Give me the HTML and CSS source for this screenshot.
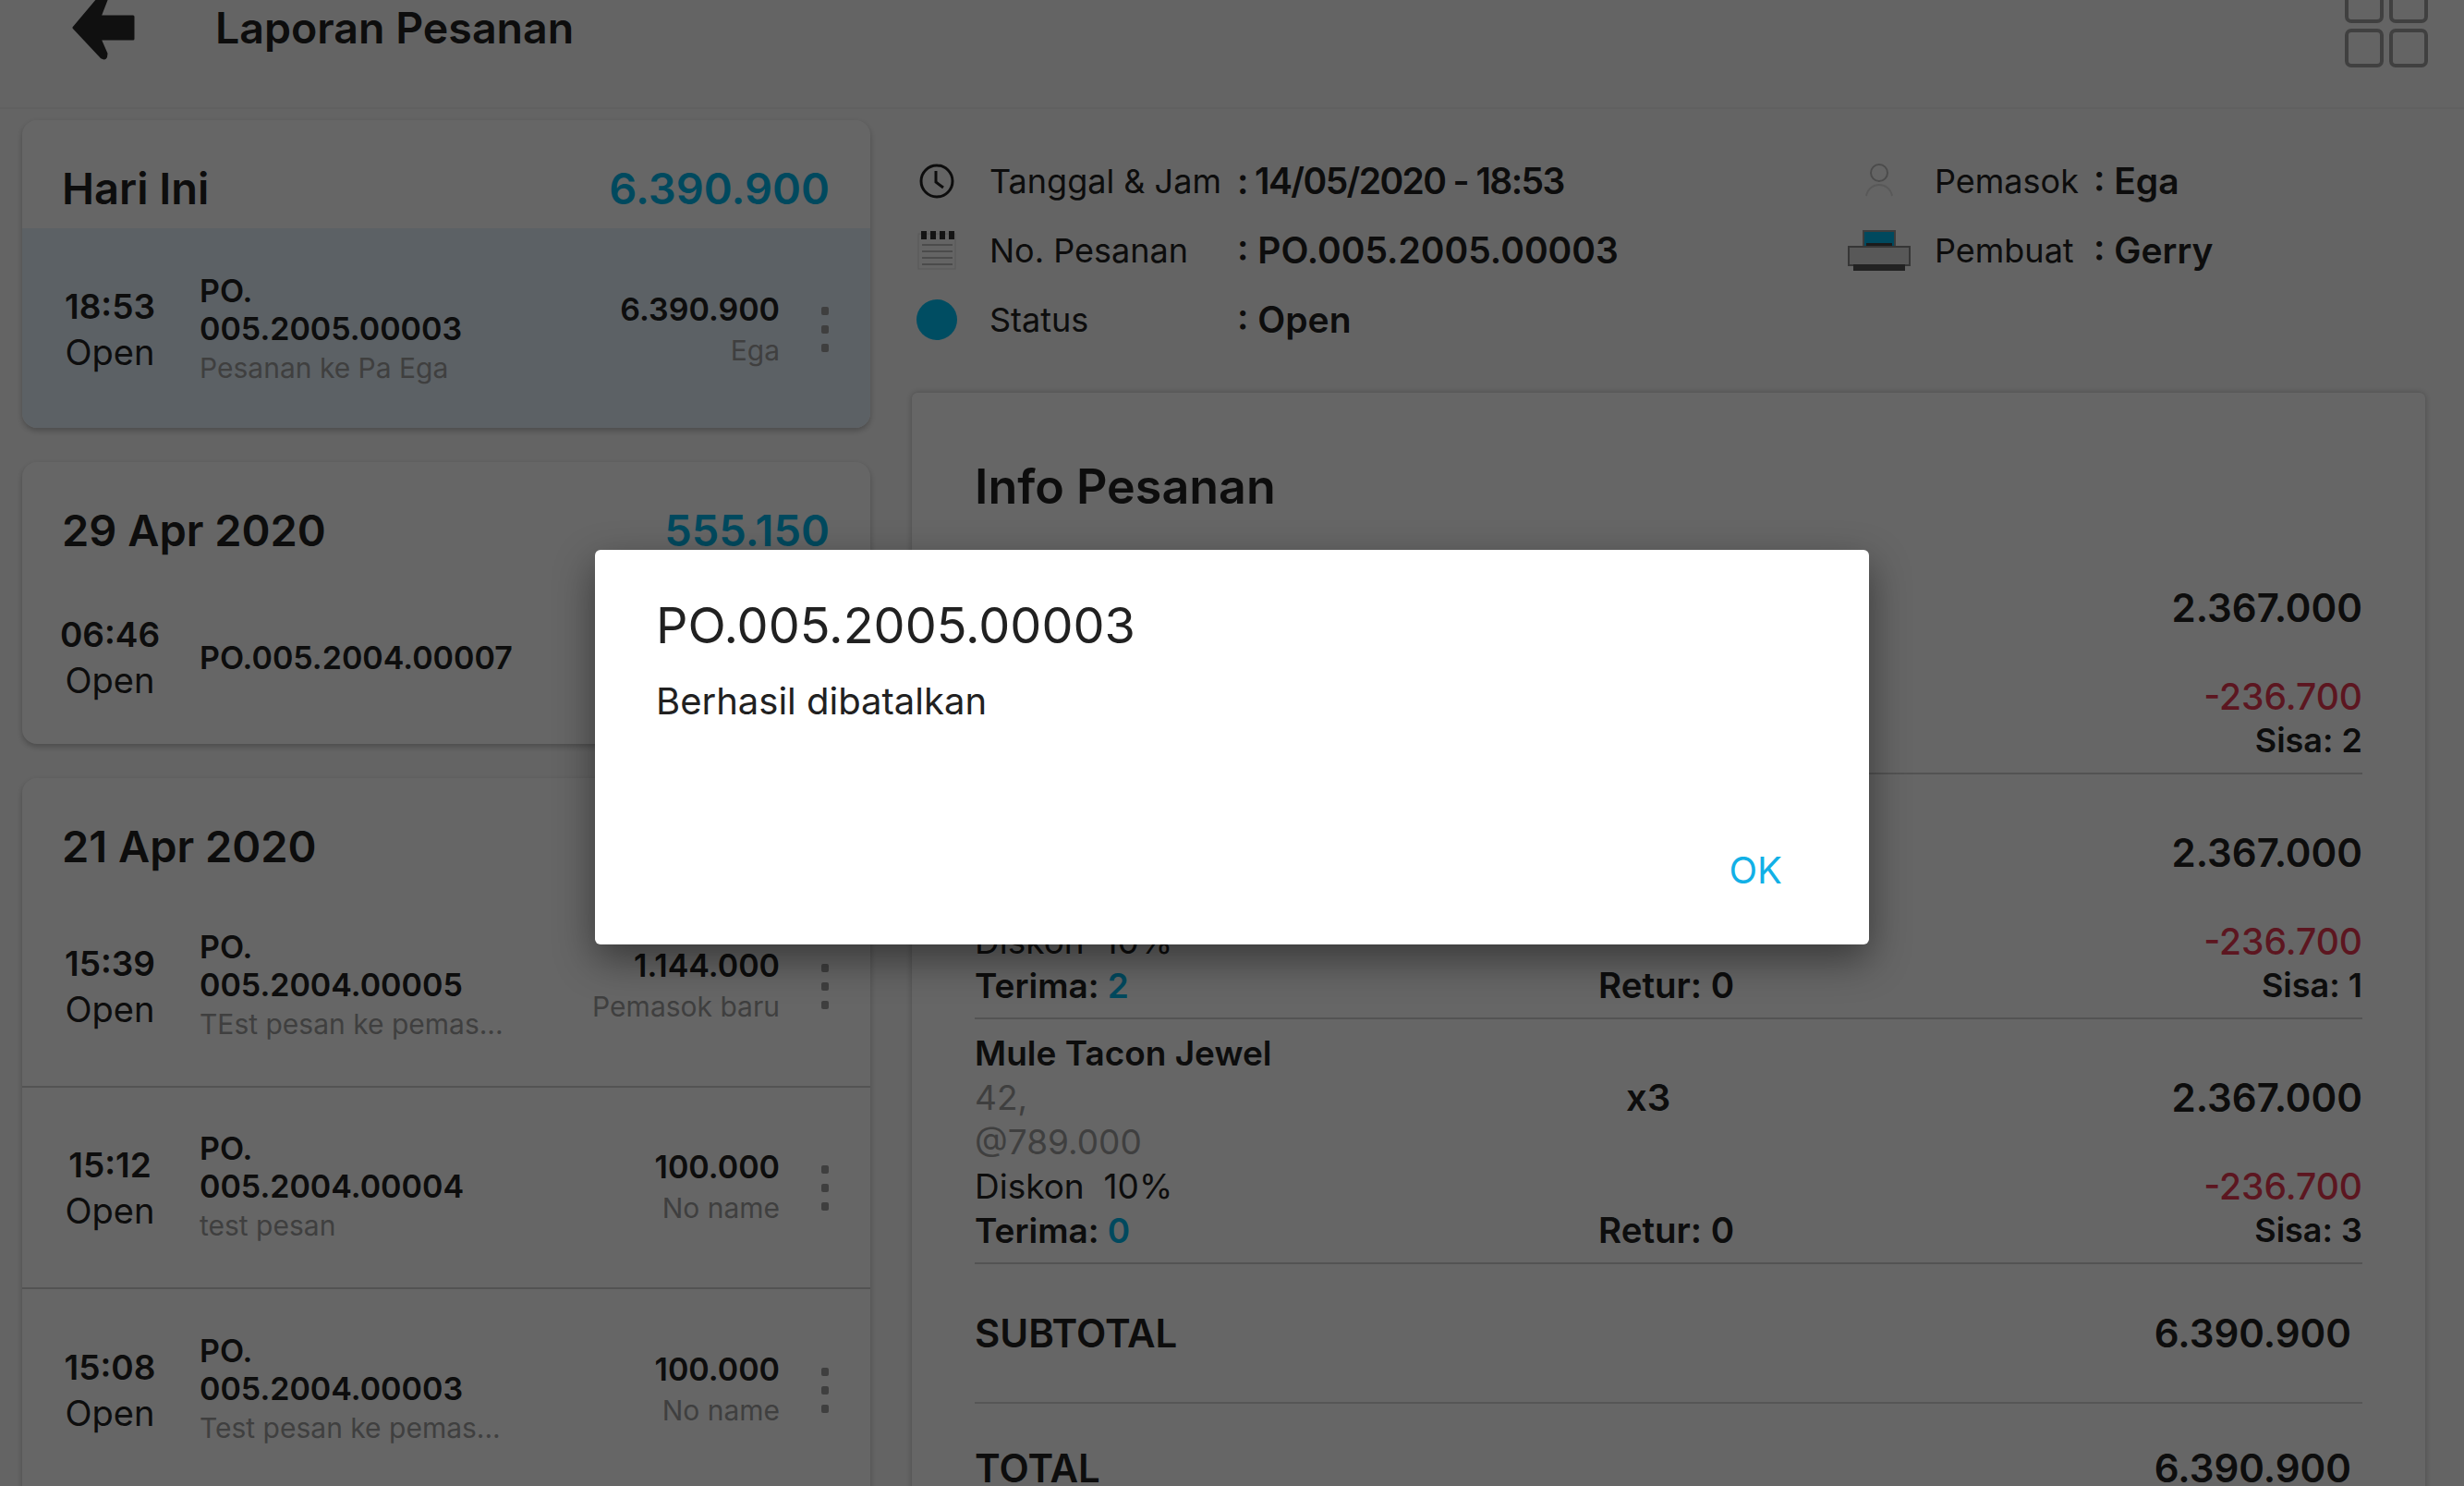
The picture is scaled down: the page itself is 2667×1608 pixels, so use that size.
FILE: index.html
```html
<!DOCTYPE html>
<html lang="en">

<head>
    <meta charset="UTF-8">
    <title>Laporan Pesanan</title>
    <link rel="stylesheet" href="styles.css">
</head>

<body>
    <header class="topbar">
        <svg class="back-icon" viewBox="78 -8 70 76">
            <path d="M112 -8 L80 30 L110 62 Q115 65 115 58 L108 42 H144 V18 H108 L115 0 Z" fill="#2a2a2a" stroke="#2a2a2a" stroke-width="3" stroke-linejoin="round" />
        </svg>
        <h1 class="page-title">Laporan Pesanan</h1>
        <svg class="grid-icon" viewBox="0 0 90 90">
            <g fill="none" stroke="#a0a0a0" stroke-width="4">
                <rect x="2" y="2" width="38" height="38" rx="5" />
                <rect x="50" y="2" width="38" height="38" rx="5" />
                <rect x="2" y="50" width="38" height="38" rx="5" />
                <rect x="50" y="50" width="38" height="38" rx="5" />
            </g>
        </svg>
    </header>

    <div class="layout">
        <aside class="orders">
            <section class="day-card">
                <div class="day-head">
                    <span>Hari Ini</span>
                    <span class="accent">6.390.900</span>
                </div>
                <div class="order selected">
                    <div class="order-time"><b>18:53</b><span>Open</span></div>
                    <div class="order-no"><b>PO.<br>005.2005.00003</b><small>Pesanan ke Pa Ega</small></div>
                    <div class="order-sum"><b>6.390.900</b><small>Ega</small></div>
                    <div class="dots"><i></i><i></i><i></i></div>
                </div>
            </section>

            <section class="day-card">
                <div class="day-head">
                    <span>29 Apr 2020</span>
                    <span class="accent">555.150</span>
                </div>
                <div class="order single">
                    <div class="order-time"><b>06:46</b><span>Open</span></div>
                    <div class="order-no"><b>PO.005.2004.00007</b></div>
                </div>
            </section>

            <section class="day-card long">
                <div class="day-head">
                    <span>21 Apr 2020</span>
                </div>
                <div class="order">
                    <div class="order-time"><b>15:39</b><span>Open</span></div>
                    <div class="order-no"><b>PO.<br>005.2004.00005</b><small>TEst pesan ke pemas...</small></div>
                    <div class="order-sum"><b>1.144.000</b><small>Pemasok baru</small></div>
                    <div class="dots"><i></i><i></i><i></i></div>
                </div>
                <div class="order">
                    <div class="order-time"><b>15:12</b><span>Open</span></div>
                    <div class="order-no"><b>PO.<br>005.2004.00004</b><small>test pesan</small></div>
                    <div class="order-sum"><b>100.000</b><small>No name</small></div>
                    <div class="dots"><i></i><i></i><i></i></div>
                </div>
                <div class="order">
                    <div class="order-time"><b>15:08</b><span>Open</span></div>
                    <div class="order-no"><b>PO.<br>005.2004.00003</b><small>Test pesan ke pemas...</small></div>
                    <div class="order-sum"><b>100.000</b><small>No name</small></div>
                    <div class="dots"><i></i><i></i><i></i></div>
                </div>
            </section>
        </aside>

        <main class="detail">
            <div class="meta">
                <div class="meta-col">
                    <div class="meta-row">
                        <svg class="meta-icon" viewBox="0 0 44 44">
                            <circle cx="22" cy="22" r="17" fill="none" stroke="#222" stroke-width="3" />
                            <path d="M21 11 V23 L29 29" fill="none" stroke="#222" stroke-width="3" />
                        </svg>
                        <span class="meta-label">Tanggal &amp; Jam</span><b class="tight">: 14/05/2020 - 18:53</b>
                    </div>
                    <div class="meta-row">
                        <svg class="meta-icon" viewBox="0 0 44 44">
                            <rect x="2" y="4" width="40" height="38" fill="#fafafa" stroke="#ddd" stroke-width="1" />
                            <path d="M5 1 h6 v9 h-6z M15 1 h6 v9 h-6z M25 1 h6 v9 h-6z M35 1 h6 v9 h-6z" fill="#333" />
                            <path d="M6 16 H39 M6 23 H39 M6 30 H39 M6 37 H39" stroke="#bbb" stroke-width="2" />
                        </svg>
                        <span class="meta-label">No. Pesanan</span><b>: PO.005.2005.00003</b>
                    </div>
                    <div class="meta-row">
                        <span class="status-dot"></span>
                        <span class="meta-label">Status</span><b>: Open</b>
                    </div>
                </div>
                <div class="meta-col second">
                    <div class="meta-row">
                        <svg class="meta-icon" viewBox="0 0 70 44">
                            <circle cx="35" cy="13" r="9" fill="none" stroke="#bbb" stroke-width="2" />
                            <path d="M21 38 C24 22 46 22 49 38" fill="none" stroke="#ddd" stroke-width="2" />
                        </svg>
                        <span class="meta-label">Pemasok</span><b>: Ega</b>
                    </div>
                    <div class="meta-row">
                        <svg class="meta-icon" viewBox="0 0 70 44">
                            <rect x="18" y="1" width="34" height="17" fill="#00b7eb" stroke="#999" stroke-width="2" />
                            <rect x="21" y="14" width="28" height="5" fill="#444" />
                            <rect x="2" y="18" width="66" height="20" fill="#ddd" stroke="#888" stroke-width="2" />
                            <rect x="7" y="37" width="56" height="7" fill="#555" />
                        </svg>
                        <span class="meta-label">Pembuat</span><b>: Gerry</b>
                    </div>
                </div>
            </div>

            <section class="info-card">
                <h2 class="info-title">Info Pesanan</h2>

                <!-- left part of the first two items sits behind the dialog -->
                <div class="item">
                    <span></span><span></span><span></span>
                    <span></span><span></span><b class="price">2.367.000</b>
                    <span></span><span></span><span></span>
                    <span></span><span></span><span class="minus">-236.700</span>
                    <span></span><span></span><b class="sisa">Sisa: 2</b>
                </div>

                <div class="item">
                    <span></span><span></span><span></span>
                    <span></span><span></span><b class="price">2.367.000</b>
                    <span></span><span></span><span></span>
                    <span>Diskon &nbsp;10%</span><span></span><span class="minus">-236.700</span>
                    <b>Terima: <em>2</em></b><b class="retur">Retur: 0</b><b class="sisa">Sisa: 1</b>
                </div>

                <div class="item">
                    <b>Mule Tacon Jewel</b><span></span><span></span>
                    <span class="muted">42,</span><b class="qty">x3</b><b class="price">2.367.000</b>
                    <span class="muted">@789.000</span><span></span><span></span>
                    <span>Diskon &nbsp;10%</span><span></span><span class="minus">-236.700</span>
                    <b>Terima: <em>0</em></b><b class="retur">Retur: 0</b><b class="sisa">Sisa: 3</b>
                </div>

                <div class="summary"><span>SUBTOTAL</span><span>6.390.900</span></div>
                <div class="summary total"><span>TOTAL</span><span>6.390.900</span></div>
            </section>
        </main>
    </div>

    <div class="scrim"></div>

    <div class="dialog">
        <div class="dialog-title">PO.005.2005.00003</div>
        <div class="dialog-text">Berhasil dibatalkan</div>
        <div class="dialog-ok">OK</div>
    </div>
</body>

</html>
```

FILE: styles.css
```css
html {
    overflow: hidden;
}

body {
    font-family: "Inter", "Noto Sans", sans-serif;
    margin: 0;
    padding: 0;
    width: 2667px;
    height: 1608px;
    overflow: hidden;
    position: relative;
    background-color: #fafafa;
    color: #212121;
}

b {
    font-weight: 600;
}

/* top bar */
.topbar {
    display: flex;
    height: 118px;
    box-sizing: border-box;
    border-bottom: 2px solid #f0f0f0;
    overflow: hidden;
}

.back-icon {
    width: 70px;
    height: 76px;
    margin: -8px 0 0 78px;
    flex-shrink: 0;
}

.page-title {
    margin: 0 0 0 85px;
    font-size: 46.5px;
    font-weight: 600;
    line-height: 60px;
}

.grid-icon {
    width: 90px;
    height: 90px;
    margin: -17px 39px 0 auto;
    flex-shrink: 0;
}

.layout {
    display: flex;
    height: 1490px;
    overflow: hidden;
}

/* left column */
.orders {
    width: 918px;
    margin: 12px 0 0 24px;
    flex-shrink: 0;
    display: flex;
    flex-direction: column;
    gap: 37px;
}

.day-card {
    background-color: #fff;
    border-radius: 16px;
    box-shadow: 0 3px 6px rgba(0, 0, 0, 0.25);
    overflow: hidden;
    flex-shrink: 0;
}

.day-card.long {
    padding-bottom: 40px;
}

.day-head {
    display: flex;
    justify-content: space-between;
    align-items: center;
    height: 117px;
    box-sizing: border-box;
    padding: 30px 44px 0 43px;
    font-size: 47px;
    font-weight: 600;
}

.accent {
    color: #00b7eb;
}

.order {
    display: flex;
    align-items: center;
    height: 218px;
    box-sizing: border-box;
    border-bottom: 2px solid #d0d0d0;
    padding-left: 18px;
}

.order:last-child {
    border-bottom: none;
}

.order.selected {
    height: 216px;
    padding-top: 3px;
    background-color: #e6f2fc;
}

.order.single {
    height: 188px;
}

.order-time {
    width: 154px;
    margin-right: 20px;
    text-align: center;
    display: flex;
    flex-direction: column;
    gap: 7px;
    font-size: 37px;
    line-height: 43px;
}

.order-time span {
    font-size: 38px;
}

.order-no {
    flex: 1;
    font-size: 34px;
    line-height: 41px;
}

.order-no small,
.order-sum small {
    display: block;
    font-size: 30px;
    line-height: 44px;
    color: #9e9e9e;
}

.order-sum {
    text-align: right;
    font-size: 34px;
    line-height: 44px;
}

.dots {
    width: 98px;
    display: flex;
    flex-direction: column;
    align-items: center;
    gap: 11px;
}

.dots i {
    width: 8px;
    height: 9px;
    background-color: #9e9e9e;
    border-radius: 2px;
}

/* right column */
.detail {
    margin-left: 45px;
    width: 1638px;
    flex-shrink: 0;
}

.meta {
    display: flex;
    height: 307px;
    padding-top: 40px;
    box-sizing: border-box;
}

.meta-col {
    width: 1012px;
    flex-shrink: 0;
    display: flex;
    flex-direction: column;
}

.meta-col.second {
    width: 626px;
}

.meta-row {
    display: flex;
    align-items: center;
    height: 75px;
    font-size: 39px;
}

.meta-icon {
    width: 44px;
    height: 44px;
    margin-left: 5px;
    margin-right: 35px;
    flex-shrink: 0;
}

.second .meta-icon {
    width: 70px;
    margin-left: 0;
    margin-right: 25px;
}

.meta-label {
    width: 268px;
    flex-shrink: 0;
    font-size: 36px;
}

.second .meta-label {
    width: 172px;
}

.tight {
    letter-spacing: -1.6px;
}

.status-dot {
    width: 44px;
    height: 44px;
    margin-left: 5px;
    margin-right: 35px;
    border-radius: 50%;
    background-color: #00c0f5;
}

.info-card {
    background-color: #fff;
    border-radius: 6px;
    box-shadow: 0 0 6px rgba(0, 0, 0, 0.25);
    padding: 67px 68px 0;
    height: 1300px;
    box-sizing: border-box;
}

.info-title {
    margin: 0 0 11px;
    font-size: 52px;
    font-weight: 600;
    line-height: 70px;
}

.item {
    display: grid;
    grid-template-columns: 675px 1fr auto;
    grid-auto-rows: 48px;
    align-items: center;
    padding: 12px 0 11px;
    border-bottom: 2px solid #cfcfcf;
    font-size: 37px;
}

.muted {
    color: #9e9e9e;
}

.qty {
    margin-left: 30px;
    font-size: 40px;
}

.price {
    text-align: right;
    font-size: 42px;
}

.minus {
    text-align: right;
    font-size: 39px;
    font-weight: 500;
    color: #e53950;
}

.retur {
    font-size: 38.5px;
}

.sisa {
    text-align: right;
    font-size: 36px;
}

.item em {
    font-style: normal;
    color: #00b7eb;
}

.summary {
    display: flex;
    justify-content: space-between;
    align-items: center;
    height: 151px;
    box-sizing: border-box;
    padding-right: 12px;
    border-bottom: 2px solid #d8d8d8;
    font-size: 42px;
    font-weight: 600;
}

.summary.total {
    padding-bottom: 10px;
}

/* dialog on top of the page */
.scrim {
    position: absolute;
    inset: 0;
    background-color: rgba(0, 0, 0, 0.6);
}

.dialog {
    position: absolute;
    left: 644px;
    top: 595px;
    width: 1379px;
    height: 427px;
    box-sizing: border-box;
    padding: 48px 94px 0 66px;
    display: flex;
    flex-direction: column;
    background-color: #fff;
    border-radius: 6px;
    box-shadow: 0 16px 44px rgba(0, 0, 0, 0.45);
}

.dialog-title {
    font-size: 54px;
    line-height: 68px;
}

.dialog-text {
    margin-top: 23px;
    font-size: 40px;
    line-height: 50px;
}

.dialog-ok {
    margin-top: 133px;
    text-align: right;
    font-size: 40px;
    line-height: 50px;
    color: #12b0e6;
}
```
